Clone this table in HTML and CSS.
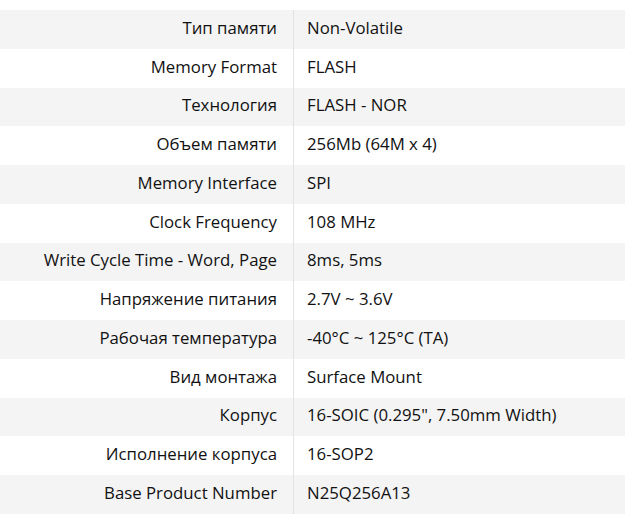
FILE: index.html
```html
<!DOCTYPE html>
<html>
<head>
<meta charset="utf-8">
<link rel="stylesheet" href="styles.css">
</head>
<body>
<table class="specs">
<tbody>
<tr><th>Тип памяти</th><td>Non-Volatile</td></tr>
<tr><th>Memory Format</th><td>FLASH</td></tr>
<tr><th>Технология</th><td>FLASH - NOR</td></tr>
<tr><th>Объем памяти</th><td>256Mb (64M x 4)</td></tr>
<tr><th>Memory Interface</th><td>SPI</td></tr>
<tr><th>Clock Frequency</th><td>108 MHz</td></tr>
<tr><th>Write Cycle Time - Word, Page</th><td>8ms, 5ms</td></tr>
<tr><th>Напряжение питания</th><td>2.7V ~ 3.6V</td></tr>
<tr><th>Рабочая температура</th><td>-40°C ~ 125°C (TA)</td></tr>
<tr><th>Вид монтажа</th><td>Surface Mount</td></tr>
<tr><th>Корпус</th><td>16-SOIC (0.295", 7.50mm Width)</td></tr>
<tr><th>Исполнение корпуса</th><td>16-SOP2</td></tr>
<tr><th>Base Product Number</th><td>N25Q256A13</td></tr>
</tbody>
</table>
</body>
</html>
```
FILE: styles.css
```css
html, body {
  margin: 0;
  padding: 0;
  background: #fff;
}
body {
  padding-top: 10px;
  font-family: "Open Sans", "Noto Sans", sans-serif;
  font-size: 16.8px;
  color: #111;
}
.specs {
  width: 625px;
  border-collapse: collapse;
  table-layout: fixed;
}
.specs tr {
  height: 38.75px;
}
.specs tr:nth-child(odd) {
  background: #f4f4f4;
}
.specs th {
  width: 277px;
  font-weight: normal;
  text-align: right;
  padding: 0 16px 4px 0;
  border-right: 1px solid #e3e3e3;
  white-space: nowrap;
}
.specs td {
  padding: 0 0 4px 13px;
  white-space: nowrap;
}
```
